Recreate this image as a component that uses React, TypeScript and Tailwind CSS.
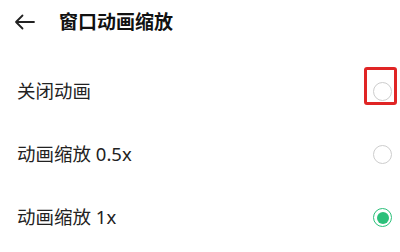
import React from 'react';

const OPTIONS = [
  { id: 'off', label: '关闭动画', checked: false, marked: true },
  { id: 'half', label: '动画缩放 0.5x', checked: false, marked: false },
  { id: 'one', label: '动画缩放 1x', checked: true, marked: false },
];

function Radio({ checked }: { checked: boolean }) {
  if (checked) {
    return (
      <div className="w-[19px] h-[19px] rounded-full border-[1.5px] border-[#2bc07a] flex items-center justify-center">
        <div className="w-[12px] h-[12px] rounded-full bg-[#2bc07a]" />
      </div>
    );
  }
  return <div className="w-[19px] h-[19px] rounded-full border-[1.5px] border-[#cdcdcd]" />;
}

export default function App() {
  return (
    <div
      className="w-[400px] h-[252px] bg-white overflow-hidden text-[#222]"
      style={{ fontFamily: '"Noto Sans", "Noto Sans CJK SC", sans-serif' }}
    >
      <div className="h-[44px] flex items-center">
        <svg className="ml-[14px]" width="21" height="16" viewBox="0 0 21 16" fill="none">
          <path d="M20 8H2M8.5 1.5L2 8l6.5 6.5" stroke="#222" strokeWidth="1.8" strokeLinecap="round" strokeLinejoin="round" />
        </svg>
        <span className="ml-[24px] text-[19px] font-bold text-[#111] leading-none">窗口动画缩放</span>
      </div>
      <div className="pt-[16px]">
        {OPTIONS.map((o) => (
          <div key={o.id} className="relative h-[63px] flex items-center justify-between pl-[17px] pr-[8px]">
            <span className="text-[18.5px] leading-none">{o.label}</span>
            <Radio checked={o.checked} />
            {o.marked && (
              <div className="absolute right-[3px] top-[7px] w-[33px] h-[38px] border-[3px] border-[#e02525] rounded-[3px]" />
            )}
          </div>
        ))}
      </div>
    </div>
  );
}
